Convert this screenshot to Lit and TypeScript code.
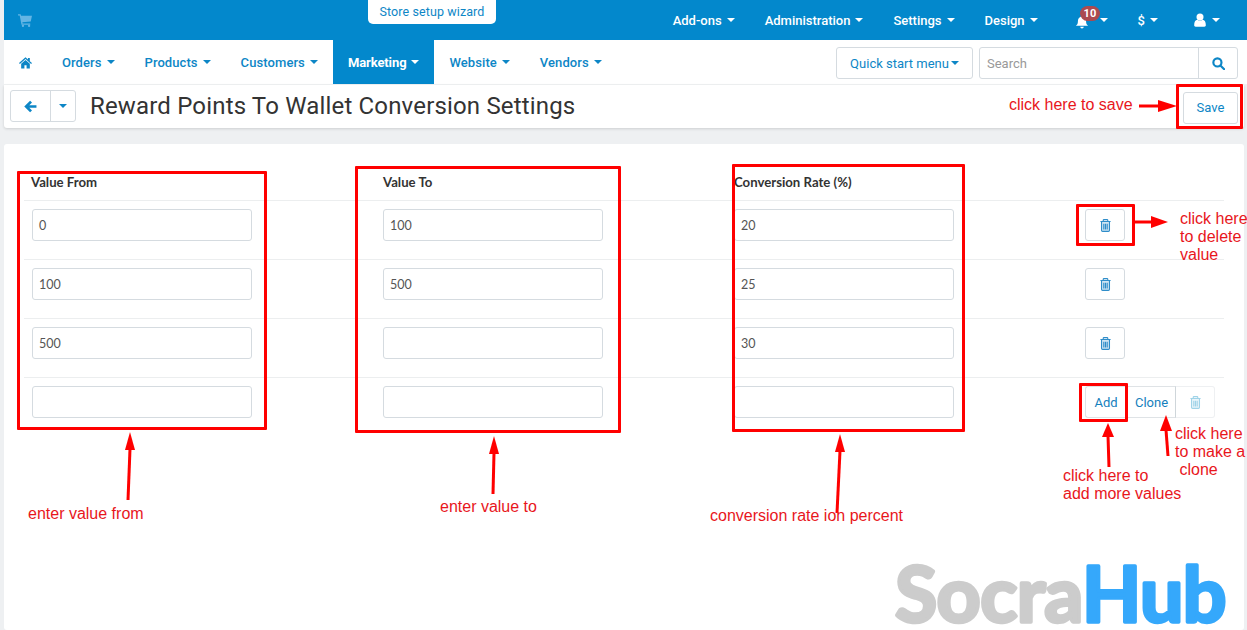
import { LitElement, html, css, svg } from "lit";
import { customElement } from "lit/decorators.js";

const caret = html`<i class="caret"></i>`;
const trash = html`<svg class="trash" viewBox="3 1 18 23" aria-hidden="true"><path d="M5 6h14v15c0 1-.7 2-1.800 2H6.800C5.700 23 5 22 5 21z" fill="currentColor" fill-opacity=".22"/><path d="M3 5.500h18M8 5V3.200C8 2.400 8.600 2 9.300 2h5.400c.7 0 1.300.4 1.300 1.200V5M5 6v15c0 1 .7 2 1.800 2h10.400c1.100 0 1.800-1 1.800-2V6M9 9.500v10M12 9.500v10M15 9.500v10" fill="none" stroke="currentColor" stroke-width="2"/></svg>`;

function arrowUp(x1: number, y1: number, x2: number, y2: number, hw: number, hl: number) {
  return svg`<line x1=${x1} y1=${y1} x2=${x2} y2=${y2 + hl - 1} stroke="#f00" stroke-width="3"/><polygon points="${x2},${y2} ${x2 - hw},${y2 + hl} ${x2 + hw},${y2 + hl}" fill="#f00"/>`;
}
function arrowRight(x1: number, x2: number, tip: number, y: number, hw: number) {
  return svg`<line x1=${x1} y1=${y} x2=${x2 + 1} y2=${y} stroke="#f00" stroke-width="3"/><polygon points="${x2},${y - hw} ${tip},${y} ${x2},${y + hw}" fill="#f00"/>`;
}

@customElement("app-root")
export class AppRoot extends LitElement {
  static styles = css`
    :host { display: block; width: 1247px; height: 630px; overflow: hidden; position: relative; background: #fff; font-family: Roboto, sans-serif; }
    .page { height: 630px; display: flex; flex-direction: column; background: #eef0f2; padding-left: 4px; box-sizing: border-box; }
    .top { height: 40px; flex: none; background: #0388cc; display: flex; align-items: center; color: #fff; font-size: 13px; font-weight: 500; position: relative; }
    .cart { width: 14px; height: 14px; margin-left: 14px; color: #64b5e4; flex: none; }
    .wizard { margin-left: 336px; align-self: flex-start; width: 128px; height: 24px; box-sizing: border-box; background: #fff; border-radius: 0 0 5px 5px; color: #0d86c6; font-size: 12.5px; font-weight: 400; display: flex; align-items: center; justify-content: center; padding-bottom: 1px; letter-spacing: .1px; }
    .top-right { margin-left: auto; display: flex; align-items: center; padding-right: 12px; }
    .top-item { padding: 0 15px; display: flex; align-items: center; gap: 5px; position: relative; }
    .top-item.bell { padding-left: 22px; gap: 11px; }
    .top-item.cur { padding-right: 20px; }
    .top-item .caret { border-top-color: #fff; }
    .caret { display: inline-block; width: 0; height: 0; border-left: 4px solid transparent; border-right: 4px solid transparent; border-top: 4px solid currentColor; }
    .ico { width: 14px; height: 14px; fill: #fff; display: block; }
    .bell .ico { transform: translateY(2px); }
    .badge { position: absolute; left: 27px; top: -7px; background: #ab4a50; color: #fff; border-radius: 8px; font-size: 11px; font-weight: 700; padding: 0 4px; height: 15px; line-height: 15px; }
    .nav { height: 44px; flex: none; background: #fff; display: flex; align-items: stretch; color: #0d86c6; font-size: 13px; font-weight: 500; border-bottom: 1px solid #f1f3f4; letter-spacing: .08px; }
    .nav-item { padding: 0 15px; display: flex; align-items: center; gap: 5px; }
    .nav-item.home svg { width: 13px; height: 13px; fill: #0d86c6; display: block; }
    .nav-item.active { background: #0388cc; color: #fff; font-weight: 700; letter-spacing: -.1px; }
    .nav-tools { margin-left: auto; display: flex; align-items: flex-start; padding: 7px 9px 0 0; gap: 6px; }
    .quick { width: 137px; height: 32px; box-sizing: border-box; border: 1px solid #d5dbe0; border-radius: 3px; display: flex; align-items: center; justify-content: center; gap: 2px; font-weight: 400; font-size: 13px; letter-spacing: 0; }
    .search { width: 259px; height: 32px; box-sizing: border-box; border: 1px solid #d5dbe0; border-radius: 3px; display: flex; }
    .search span { flex: 1; color: #999; font-weight: 400; padding-left: 7px; line-height: 31px; font-size: 13px; letter-spacing: 0; }
    .search b { width: 38px; border-left: 1px solid #d5dbe0; display: flex; align-items: center; justify-content: center; }
    .search svg { width: 13px; height: 13px; }
    .head { height: 43px; flex: none; background: #fff; box-sizing: border-box; margin-right: 3px; border-radius: 0 0 3px 3px; box-shadow: 0 1px 3px rgba(0,0,0,.14); display: flex; align-items: flex-start; position: relative; }
    .back { margin: 5px 0 0 6px; width: 66px; height: 32px; box-sizing: border-box; border: 1px solid #d5dbe0; border-radius: 3px; display: flex; color: #0d86c6; }
    .back span { display: flex; align-items: center; justify-content: center; }
    .back span:first-child { width: 39px; border-right: 1px solid #d5dbe0; }
    .back span:last-child { flex: 1; }
    .back svg { width: 13px; height: 13px; }
    h1 { margin: 5px 0 0 14px; font-size: 24px; line-height: 32px; font-weight: 400; color: #333; letter-spacing: .17px; }
    .save { margin: 7px 6px 0 auto; width: 55px; height: 32px; box-sizing: border-box; border: 1px solid #d5dbe0; border-radius: 3px; color: #0d86c6; font-size: 13px; padding-bottom: 1px; display: flex; align-items: center; justify-content: center; }
    .card { flex: 1; margin: 16px 3px 0 0; background: #fff; border-radius: 3px; padding-left: 20px; }
    .table { width: 1200px; display: grid; grid-template-columns: 351px 351px 351px 147px; }
    .th { height: 56px; box-sizing: border-box; padding: 31px 0 0 8px; font: 700 13.2px/15px Lato, sans-serif; color: #333; }
    .th:first-child { padding-left: 7px; }
    .td { height: 59px; box-sizing: border-box; border-top: 1px solid #eceeef; padding: 8px 0 0 8px; }
    .input { width: 220px; height: 32px; box-sizing: border-box; border: 1px solid #d5dbe0; border-radius: 3px; padding-left: 6px; font: 400 12.5px/32px Lato, sans-serif; color: #555; }
    .btn { width: 40px; height: 32px; box-sizing: border-box; border: 1px solid #d5dbe0; border-radius: 3px; display: flex; align-items: center; justify-content: center; color: #2f8dc9; }
    .trash { width: 11px; height: 13px; display: block; }
    .group { display: flex; width: 130px; height: 32px; font-size: 13px; color: #1580bd; font-weight: 400; }
    .group span { display: flex; align-items: center; justify-content: center; box-sizing: border-box; border: 1px solid #dfe3e6; }
    .group .a { width: 46px; border-right: 0; border-radius: 3px 0 0 3px; padding-right: 5px; }
    .group .c { width: 45px; border-left: 0; border-right-color: #cfd6da; padding-right: 3px; }
    .group .d { width: 39px; border-left: 0; border-color: #eef0f2; border-radius: 0 3px 3px 0; color: #9fd3e8; }
    .overlay { position: absolute; inset: 0; pointer-events: none; font: 16px/18px "Liberation Sans", Arial, sans-serif; color: #e8161c; }
    .overlay svg { position: absolute; inset: 0; width: 1247px; height: 630px; }
    .box { position: absolute; box-sizing: border-box; border: 3px solid #f00; border-radius: 1px; }
    .note { position: absolute; white-space: pre; }
    .logo { position: absolute; left: 0; top: 0; width: 1247px; height: 630px; pointer-events: none; }
    .logo text { font: 700 77px Lato, sans-serif; letter-spacing: -.6px; stroke-width: 3.5px; stroke-linejoin: round; fill: #ccc; stroke: #ccc; }
    .logo tspan { fill: #35a8fb; stroke: #35a8fb; }
    .b1 { left: 1176px; top: 84px; width: 67px; height: 45px; }
    .b2 { left: 17px; top: 171px; width: 250px; height: 259px; }
    .b3 { left: 355px; top: 166px; width: 266px; height: 267px; }
    .b4 { left: 732px; top: 164px; width: 233px; height: 268px; }
    .b5 { left: 1076px; top: 204px; width: 59px; height: 42px; }
    .b6 { left: 1079px; top: 383px; width: 49px; height: 39px; }
    .n1 { left: 1009px; top: 96px; }
    .n2 { left: 1180px; top: 210px; }
    .n3 { left: 1175px; top: 425px; }
    .n4 { left: 1063px; top: 467px; }
    .n5 { left: 28px; top: 505px; }
    .n6 { left: 440px; top: 498px; }
    .n7 { left: 710px; top: 507px; }
  `;

  private rows = [["0", "100", "20"], ["100", "500", "25"], ["500", "", "30"], ["", "", ""]];

  render() {
    return html`
      <div class="page">
        <div class="top">
          <svg class="cart" viewBox="0 0 24 24" fill="currentColor"><path d="M0 2h4.500l.7 2.500H24l-2.200 10L7.500 16l.4 2H21v2.200H6L2.900 4.300H0z"/><circle cx="8.500" cy="22" r="2"/><circle cx="19" cy="22" r="2"/></svg>
          <div class="wizard">Store setup wizard</div>
          <div class="top-right">
            ${["Add-ons", "Administration", "Settings", "Design"].map((t) => html`<div class="top-item">${t}${caret}</div>`)}
            <div class="top-item bell">
              <svg class="ico" viewBox="0 0 24 24"><path d="M12 1a2 2 0 0 0-2 2C6.500 4 5 7 5 10.500c0 4.500-1.500 6-3.500 8h21c-2-2-3.500-3.500-3.500-8C19 7 17.500 4 14 3a2 2 0 0 0-2-2zM9 20a3 3 0 0 0 6 0z"/></svg>
              <span class="badge">10</span>${caret}
            </div>
            <div class="top-item cur">$${caret}</div>
            <div class="top-item">
              <svg class="ico" viewBox="0 0 24 24"><circle cx="12" cy="7" r="6"/><path d="M2 21c0-6 2-9 5.500-9.500C8.700 12.500 10.300 13 12 13s3.300-.5 4.500-1.500C20 12 22 15 22 21c0 1.500-1 2.500-2.500 2.500h-15C3 23.500 2 22.500 2 21z"/></svg>
              ${caret}
            </div>
          </div>
        </div>
        <div class="nav">
          <div class="nav-item home"><svg viewBox="0 0 24 24"><path d="M12 2.500 0 13l1.600 1.800L12 5.700l10.400 9.100L24 13l-4-3.500V3.500h-3.500v3zM4 14.500V23h6v-6h4v6h6v-8.500L12 7.500z"/></svg></div>
          ${["Orders", "Products", "Customers"].map((t) => html`<div class="nav-item">${t}${caret}</div>`)}
          <div class="nav-item active">Marketing${caret}</div>
          ${["Website", "Vendors"].map((t) => html`<div class="nav-item">${t}${caret}</div>`)}
          <div class="nav-tools">
            <div class="quick">Quick start menu ${caret}</div>
            <div class="search"><span>Search</span><b><svg viewBox="0 0 24 24" fill="none" stroke="#0d86c6" stroke-width="4"><circle cx="10" cy="10" r="7.500"/><path d="m15.500 15.500 7 7" stroke-linecap="round"/></svg></b></div>
          </div>
        </div>
        <div class="head">
          <div class="back">
            <span><svg viewBox="0 0 24 24" fill="none" stroke="#0d86c6" stroke-width="5"><path d="M13 3 4 12l9 9M5 12h18"/></svg></span>
            <span>${caret}</span>
          </div>
          <h1>Reward Points To Wallet Conversion Settings</h1>
          <div class="save">Save</div>
        </div>
        <div class="card">
          <div class="table">
            <div class="th">Value From</div><div class="th">Value To</div><div class="th">Conversion Rate (%)</div><div class="th"></div>
            ${this.rows.map((r, i) => html`
              ${r.map((v) => html`<div class="td"><div class="input">${v}</div></div>`)}
              <div class="td">
                ${i < 3
                  ? html`<div class="btn">${trash}</div>`
                  : html`<div class="group"><span class="a">Add</span><span class="c">Clone</span><span class="d">${trash}</span></div>`}
              </div>`)}
          </div>
        </div>
      </div>
      <svg class="logo" viewBox="0 0 1247 630"><text x="895" y="622">Socra<tspan>Hub</tspan></text></svg>
      <div class="overlay">
        <div class="box b1"></div>
        <div class="box b2"></div>
        <div class="box b3"></div>
        <div class="box b4"></div>
        <div class="box b5"></div>
        <div class="box b6"></div>
        <svg viewBox="0 0 1247 630">
          ${arrowRight(1139, 1158, 1177, 106, 6)}
          ${arrowRight(1135, 1151, 1168, 222, 6)}
          ${arrowUp(128, 500, 130, 432, 5, 18)}
          ${arrowUp(493, 494, 494, 436, 5, 18)}
          ${arrowUp(837, 513, 840, 434, 5, 18)}
          ${arrowUp(1109, 467, 1108, 423, 6, 14)}
          ${arrowUp(1168, 456, 1166, 415, 6, 16)}
        </svg>
        <div class="note n1">click here to save</div>
        <div class="note n2">click here
to delete
value</div>
        <div class="note n3">click here
to make a
 clone</div>
        <div class="note n4">click here to
add more values</div>
        <div class="note n5">enter value from</div>
        <div class="note n6">enter value to</div>
        <div class="note n7">conversion rate ion percent</div>
      </div>
    `;
  }
}
